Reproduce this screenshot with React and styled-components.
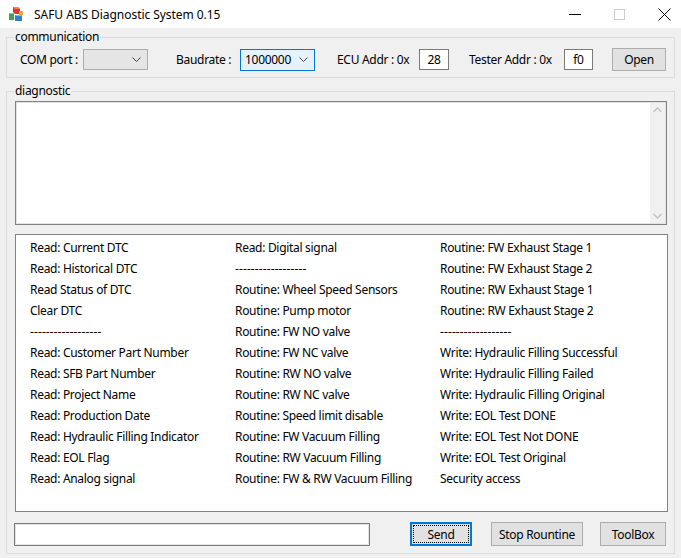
import React from 'react';
import styled, { createGlobalStyle } from 'styled-components';

const GlobalStyle = createGlobalStyle`
  html, body {
    margin: 0;
    padding: 0;
    background: #f0f0f0;
  }
  body {
    font-family: "Noto Sans", "Liberation Sans", sans-serif;
    font-size: 12px;
    letter-spacing: -0.3px;
    color: #000;
  }
`;

const Window = styled.div`
  width: 681px;
  height: 558px;
  display: flex;
  flex-direction: column;
  background: #f0f0f0;
  overflow: hidden;
`;

const TitleBar = styled.div`
  height: 28px;
  flex: none;
  background: #fff;
  display: flex;
  align-items: center;
`;

const Title = styled.div`
  margin-left: 10px;
  font-size: 12px;
  letter-spacing: -0.05px;
  color: #000;
`;

const WinControls = styled.div`
  margin-left: auto;
  margin-right: -6px;
  display: flex;
  align-items: center;
  height: 100%;
`;

const WinButton = styled.div`
  width: 45px;
  height: 100%;
  display: flex;
  align-items: center;
  justify-content: center;
`;

const Body = styled.div`
  flex: 1;
  display: flex;
  flex-direction: column;
  padding: 1px 6px 4px 6px;
`;

const Group = styled.fieldset`
  margin: ${p => p.$top || 0}px 0 0 0;
  padding: ${p => p.$pad};
  border: 1px solid #dcdcdc;
  min-width: 0;
  flex: ${p => (p.$grow ? 1 : 'none')};
  display: flex;
  flex-direction: column;
`;

const Legend = styled.legend`
  margin-left: ${p => p.$ml}px;
  padding: 0 1px;
  line-height: 16px;
  font-size: 12px;
`;

const CommRow = styled.div`
  display: flex;
  align-items: center;
  height: 23px;
`;

const Label = styled.span`
  width: ${p => p.$w}px;
  margin-left: ${p => p.$ml || 0}px;
  flex: none;
  white-space: nowrap;
`;

const Combo = styled.div`
  width: ${p => p.$w}px;
  height: ${p => (p.$active ? 22 : 21)}px;
  box-sizing: border-box;
  border: 1px solid ${p => (p.$active ? '#0078d7' : '#adadad')};
  background: ${p => (p.$active ? '#e5f1fb' : '#e5e5e5')};
  display: flex;
  align-items: center;
  padding: 0 6px 0 4px;
  flex: none;
`;

const ComboText = styled.span`
  flex: 1;
`;

const AddrInput = styled.div`
  width: ${p => p.$w}px;
  height: 21px;
  box-sizing: border-box;
  border: 1px solid #7a7a7a;
  background: #fff;
  display: flex;
  align-items: center;
  justify-content: center;
  flex: none;
`;

const Button = styled.div`
  width: ${p => p.$w}px;
  height: ${p => p.$h || 23}px;
  margin-left: ${p => p.$ml || 0}px;
  box-sizing: border-box;
  border: 1px solid ${p => (p.$focus ? '#0078d7' : '#adadad')};
  box-shadow: ${p => (p.$focus ? 'inset 0 0 0 1px #0078d7' : 'none')};
  background: #e1e1e1;
  display: flex;
  align-items: center;
  justify-content: center;
  flex: none;
  position: relative;
`;

const FocusRect = styled.span`
  position: absolute;
  inset: 2px;
  border: 1px dotted #000;
`;

const LogBox = styled.div`
  margin-top: 2px;
  margin-right: 1px;
  height: 124px;
  box-sizing: border-box;
  border: 1px solid #828282;
  display: flex;
  background: #fff;
`;

const LogInner = styled.div`
  flex: 1;
  border: 1px solid #e3e3e3;
  display: flex;
  justify-content: flex-end;
`;

const ScrollBar = styled.div`
  width: 15px;
  background: #f0f0f0;
  display: flex;
  flex-direction: column;
  justify-content: space-between;
  align-items: center;
  padding: 4px 0;
`;

const CommandList = styled.div`
  margin-top: 9px;
  height: 278px;
  box-sizing: border-box;
  border: 1px solid #828282;
  background: #fff;
  display: grid;
  grid-template-columns: 205px 205px 1fr;
  grid-auto-flow: column;
  grid-template-rows: repeat(12, 21px);
  padding: 2px 0 0 14px;
  align-content: start;
`;

const Item = styled.div`
  line-height: 21px;
  white-space: nowrap;
  letter-spacing: ${p => (p.$sep ? '0.1px' : 'inherit')};
`;

const BottomRow = styled.div`
  margin-top: 10px;
  display: flex;
  align-items: center;
  margin-left: -1px;
`;

const CmdInput = styled.div`
  width: 356px;
  height: 23px;
  box-sizing: border-box;
  border: 1px solid #7a7a7a;
  background: #fff;
  box-shadow: inset 0 0 0 1px #e3e3e3;
  flex: none;
`;

const Chevron = ({ up }) => (
  <svg width="9" height="6" viewBox="0 0 9 6">
    <path
      d={up ? 'M0.5 5 L4.5 1 L8.5 5' : 'M0.5 1 L4.5 5 L8.5 1'}
      fill="none"
      stroke="#c2c2c2"
      strokeWidth="1.3"
    />
  </svg>
);

const DropArrow = () => (
  <svg width="9" height="5" viewBox="0 0 9 5">
    <path d="M0.5 0.5 L4.5 4.5 L8.5 0.5" fill="none" stroke="#404040" strokeWidth="1" />
  </svg>
);

// little stacked-cubes app icon
const AppIcon = () => (
  <svg width="16" height="16" viewBox="0 0 16 16" style={{ marginLeft: 8 }}>
    <path d="M5 1 L10 1 L12 3 L12 8 L7 8 L5 6 Z" fill="#d9392b" />
    <path d="M5 1 L10 1 L12 3 L7 3 Z" fill="#f08070" />
    <path d="M11 5 L15 5 L15 9 L11 9 Z" fill="#f2a63a" />
    <path d="M1 7 L6 7 L6 14 L1 14 Z" fill="#3fa548" />
    <path d="M1 7 L5 7 L6 8 L2 8 Z" fill="#8fd08f" />
    <path d="M7 9 L14 9 L14 15 L7 15 Z" fill="#2f7fd6" />
    <path d="M7 9 L13 9 L14 10 L8 10 Z" fill="#86b8ee" />
  </svg>
);

const SEP = '------------------';

const col1 = [
  'Read: Current DTC',
  'Read: Historical DTC',
  'Read Status of DTC',
  'Clear DTC',
  SEP,
  'Read: Customer Part Number',
  'Read: SFB Part Number',
  'Read: Project Name',
  'Read: Production Date',
  'Read: Hydraulic Filling Indicator',
  'Read: EOL Flag',
  'Read: Analog signal',
];

const col2 = [
  'Read: Digital signal',
  SEP,
  'Routine: Wheel Speed Sensors',
  'Routine: Pump motor',
  'Routine: FW NO valve',
  'Routine: FW NC valve',
  'Routine: RW NO valve',
  'Routine: RW NC valve',
  'Routine: Speed limit disable',
  'Routine: FW Vacuum Filling',
  'Routine: RW Vacuum Filling',
  'Routine: FW & RW Vacuum Filling',
];

const col3 = [
  'Routine: FW Exhaust Stage 1',
  'Routine: FW Exhaust Stage 2',
  'Routine: RW Exhaust Stage 1',
  'Routine: RW Exhaust Stage 2',
  SEP,
  'Write: Hydraulic Filling Successful',
  'Write: Hydraulic Filling Failed',
  'Write: Hydraulic Filling Original',
  'Write: EOL Test DONE',
  'Write: EOL Test Not DONE',
  'Write: EOL Test Original',
  'Security access',
];

export default function App() {
  return (
    <>
      <GlobalStyle />
      <Window>
        <TitleBar>
          <AppIcon />
          <Title>SAFU ABS Diagnostic System 0.15</Title>
          <WinControls>
            <WinButton>
              <svg width="12" height="12" viewBox="0 0 12 12">
                <path d="M0 6.5 H12" stroke="#000" strokeWidth="1" />
              </svg>
            </WinButton>
            <WinButton>
              <svg width="11" height="11" viewBox="0 0 11 11">
                <rect x="0.5" y="0.5" width="10" height="10" fill="none" stroke="#cccccc" strokeWidth="1" />
              </svg>
            </WinButton>
            <WinButton>
              <svg width="13" height="13" viewBox="0 0 13 13">
                <path d="M0.5 0.5 L12.5 12.5 M12.5 0.5 L0.5 12.5" stroke="#000" strokeWidth="1" />
              </svg>
            </WinButton>
          </WinControls>
        </TitleBar>

        <Body>
          <Group $pad="3px 7px 6px 13px">
            <Legend $ml={-6}>communication</Legend>
            <CommRow>
              <Label $w={63}>COM port :</Label>
              <Combo $w={65}>
                <ComboText />
                <DropArrow />
              </Combo>
              <Label $w={64} $ml={28}>Baudrate :</Label>
              <Combo $w={75} $active>
                <ComboText>1000000</ComboText>
                <DropArrow />
              </Combo>
              <Label $w={82} $ml={22}>ECU Addr : 0x</Label>
              <AddrInput $w={30}>28</AddrInput>
              <Label $w={95} $ml={20}>Tester Addr : 0x</Label>
              <AddrInput $w={29}>f0</AddrInput>
              <Button $w={54} $ml={19}>Open</Button>
            </CommRow>
          </Group>

          <Group $top={5} $grow $pad="0 6px 6px 8px">
            <Legend $ml={-1}>diagnostic</Legend>
            <LogBox>
              <LogInner>
                <ScrollBar>
                  <Chevron up />
                  <Chevron />
                </ScrollBar>
              </LogInner>
            </LogBox>

            <CommandList>
              {[...col1, ...col2, ...col3].map((t, i) => (
                <Item key={i} $sep={t === SEP}>{t}</Item>
              ))}
            </CommandList>

            <BottomRow>
              <CmdInput />
              <Button $w={62} $h={24} $ml={40} $focus>
                <FocusRect />
                Send
              </Button>
              <Button $w={92} $h={24} $ml={19}>Stop Rountine</Button>
              <Button $w={66} $h={24} $ml={17}>ToolBox</Button>
            </BottomRow>
          </Group>
        </Body>
      </Window>
    </>
  );
}
